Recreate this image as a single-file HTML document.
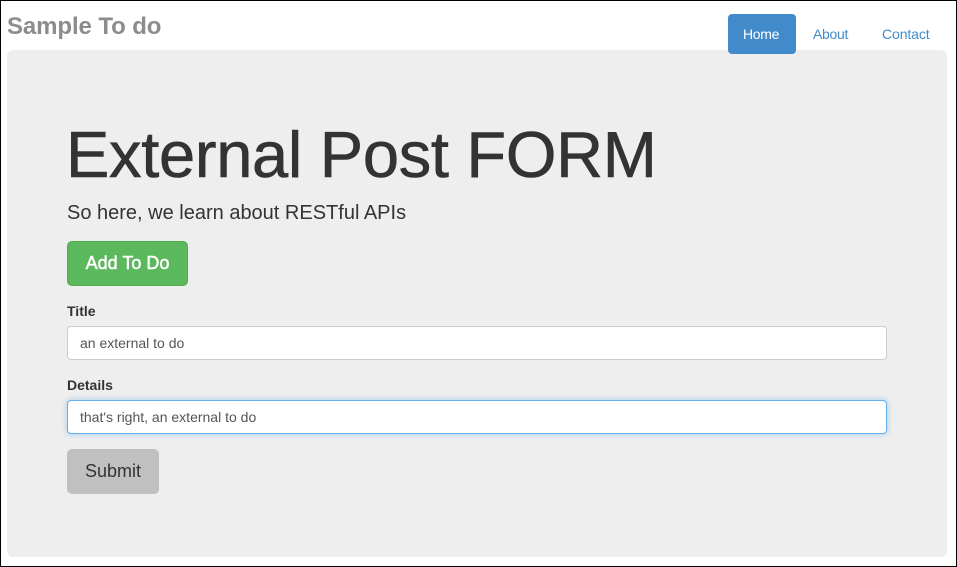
<!DOCTYPE html>
<html><head><style>
*{margin:0;padding:0;box-sizing:border-box}
body{width:957px;height:567px;position:relative;background:#fff;font-family:"Liberation Sans",Arial,sans-serif;overflow:hidden}
.frame{position:absolute;left:0;top:0;width:957px;height:567px;border:1px solid #000;pointer-events:none;z-index:9}
.a{position:absolute;white-space:nowrap}
</style></head><body>
<div class="frame"></div>
<div class="a" style="left:7px;top:13px;font-size:24px;font-weight:bold;color:#8c8c8c;letter-spacing:-0.1px">Sample To do</div>
<div class="a" style="left:7px;top:50px;width:940px;height:507px;background:#eee;border-radius:6px"></div>
<div class="a" style="left:728px;top:14px;width:68px;height:40px;background:#428bca;border-radius:4px;z-index:2"></div>
<div class="a" style="left:743px;top:26px;font-size:14px;color:#fff;z-index:3;letter-spacing:-0.3px">Home</div>
<div class="a" style="left:813px;top:26px;font-size:14px;color:#428bca;letter-spacing:-0.3px">About</div>
<div class="a" style="left:882px;top:26px;font-size:14px;color:#428bca;letter-spacing:-0.1px">Contact</div>
<div class="a" style="left:66px;top:117px;font-size:65px;color:#333;letter-spacing:-0.3px;-webkit-text-stroke:0.6px #333">External Post FORM</div>
<div class="a" style="left:67px;top:202px;font-size:20px;color:#333">So here, we learn about RESTful APIs</div>
<div class="a" style="left:67px;top:241px;width:121px;height:45px;background:#5cb85c;border:1px solid #4cae4c;border-radius:5px;color:#fff;font-size:18px;line-height:43px;text-align:center;-webkit-text-stroke:0.5px #fff">Add To Do</div>
<div class="a" style="left:67px;top:303px;font-size:14px;font-weight:bold;color:#333">Title</div>
<div class="a" style="left:67px;top:326px;width:820px;height:34px;background:#fff;border:1px solid #ccc;border-radius:4px;font-size:14px;color:#555;padding-left:12px;line-height:32px">an external to do</div>
<div class="a" style="left:67px;top:377px;font-size:14px;font-weight:bold;color:#333">Details</div>
<div class="a" style="left:67px;top:400px;width:820px;height:34px;background:#fff;border:1px solid #66afe9;box-shadow:0 0 6px rgba(102,175,233,.6);border-radius:4px;font-size:14px;color:#555;padding-left:12px;line-height:32px">that's right, an external to do</div>
<div class="a" style="left:67px;top:449px;width:92px;height:45px;background:#c0c0c0;border-radius:5px;color:#333;font-size:18px;line-height:45px;text-align:center">Submit</div>
</body></html>
